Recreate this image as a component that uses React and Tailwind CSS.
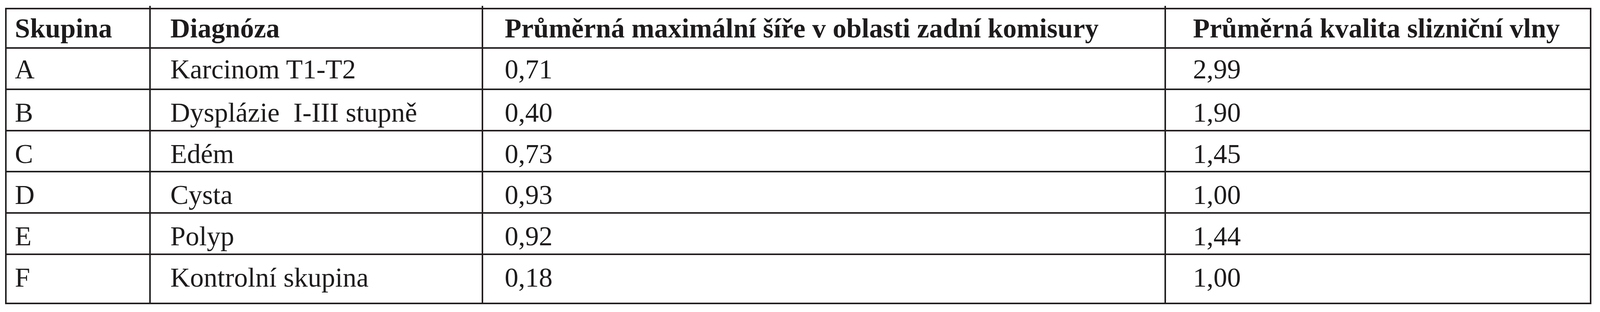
import React from "react";

const rows = [
  { g: "A", d: "Karcinom T1-T2", s: "0,71", k: "2,99", h: "h-[102px]", pt: "pt-[11px]" },
  { g: "B", d: "Dysplázie  I-III stupně", s: "0,40", k: "1,90", h: "h-[102px]", pt: "pt-[16px]" },
  { g: "C", d: "Edém", s: "0,73", k: "1,45", h: "h-[101px]", pt: "pt-[16px]" },
  { g: "D", d: "Cysta", s: "0,93", k: "1,00", h: "h-[102px]", pt: "pt-[16px]" },
  { g: "E", d: "Polyp", s: "0,92", k: "1,44", h: "h-[102px]", pt: "pt-[16px]" },
  { g: "F", d: "Kontrolní skupina", s: "0,18", k: "1,00", h: "h-[122px]", pt: "pt-[16px]" },
];

function Row({ cells, h, pt, bold }) {
  const base = `bg-white whitespace-pre ${h} ${pt} ${bold ? "font-bold" : "font-normal"}`;
  return (
    <>
      <div className={`${base} pl-[21px]`}>{cells[0]}</div>
      <div className={`${base} pl-[50px]`}>{cells[1]}</div>
      <div className={`${base} pl-[55px]`}>{cells[2]}</div>
      <div className={`${base} pl-[69px]`}>{cells[3]}</div>
    </>
  );
}

export default function App() {
  return (
    <div className="min-h-screen w-full bg-white pt-[15px] pl-[13px] font-['Liberation_Serif','Times_New_Roman',serif] text-[70px] leading-[84px] text-[#1e1b1c]">
      <div className="flex h-[5px]">
        <div className="w-[369px]" />
        <div className="w-[4px] bg-[#231f20]" />
        <div className="w-[847px]" />
        <div className="w-[4px] bg-[#231f20]" />
        <div className="w-[1744px]" />
        <div className="w-[4px] bg-[#231f20]" />
      </div>
      <div className="grid w-fit grid-cols-[365px_847px_1744px_1085px] gap-[4px] bg-[#231f20] p-[4px]">
        <Row
          cells={["Skupina", "Diagnóza", "Průměrná maximální šíře v oblasti zadní komisury", "Průměrná kvalita slizniční vlny"]}
          h="h-[97px]"
          pt="pt-[7px]"
          bold
        />
        {rows.map((r) => (
          <Row key={r.g} cells={[r.g, r.d, r.s, r.k]} h={r.h} pt={r.pt} />
        ))}
      </div>
    </div>
  );
}
